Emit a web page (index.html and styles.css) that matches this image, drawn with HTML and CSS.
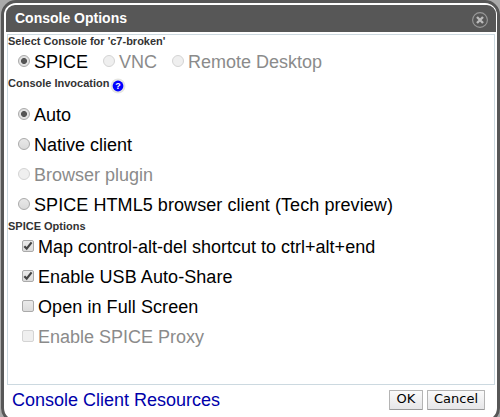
FILE: index.html
```html
<!DOCTYPE html>
<html lang="en">
<head>
<meta charset="utf-8">
<title>Console Options</title>
<link rel="stylesheet" href="styles.css">
</head>
<body>
<div class="dialog">
  <div class="header">
    <span class="title">Console Options</span>
    <svg class="close" width="16" height="16" viewBox="0 0 16 16"><circle cx="8" cy="8" r="7.4" fill="none" stroke="#999" stroke-width="1.1"/><path d="M5 5L11 11M11 5L5 11" stroke="#bbb" stroke-width="2.4"/></svg>
  </div>
  <div class="panel">
    <div class="label">Select Console for 'c7-broken'</div>
    <div class="protocols">
      <label class="option"><i class="radio on"></i><span>SPICE</span></label>
      <label class="option off"><i class="radio"></i><span>VNC</span></label>
      <label class="option off"><i class="radio"></i><span>Remote Desktop</span></label>
    </div>
    <div class="label invocation">Console Invocation<svg class="help" width="16" height="16" viewBox="0 0 16 16"><circle cx="8" cy="8" r="7.5" fill="#e6e6e2"/><circle cx="8" cy="8" r="5.4" fill="#00f"/><text x="8" y="11.2" text-anchor="middle">?</text></svg></div>
    <div class="list radios">
      <label class="option"><i class="radio on"></i><span>Auto</span></label>
      <label class="option"><i class="radio"></i><span>Native client</span></label>
      <label class="option off"><i class="radio"></i><span>Browser plugin</span></label>
      <label class="option wide"><i class="radio"></i><span>SPICE HTML5 browser client (Tech preview)</span></label>
    </div>
    <div class="label">SPICE Options</div>
    <div class="list checks">
      <label class="option"><i class="check"><svg width="12" height="12" viewBox="0 0 12 12"><path d="M2.3 6.2L4.7 8.6L9.6 2.4"/></svg></i><span>Map control-alt-del shortcut to ctrl+alt+end</span></label>
      <label class="option wide"><i class="check"><svg width="12" height="12" viewBox="0 0 12 12"><path d="M2.3 6.2L4.7 8.6L9.6 2.4"/></svg></i><span>Enable USB Auto-Share</span></label>
      <label class="option wide"><i class="check"></i><span>Open in Full Screen</span></label>
      <label class="option off"><i class="check"></i><span>Enable SPICE Proxy</span></label>
    </div>
  </div>
  <div class="footer">
    <a class="link">Console Client Resources</a>
    <button class="btn ok">OK</button>
    <button class="btn cancel">Cancel</button>
  </div>
</div>
</body>
</html>
```
FILE: styles.css
```css
* { box-sizing: border-box; }
html { overflow: hidden; height: 417px; }
body {
  margin: 0;
  height: 417px;
  overflow: hidden;
  background: #aaa;
  font-family: "Liberation Sans", Arial, sans-serif;
}
.dialog {
  width: 499px;
  height: 423px;
  margin-left: 1px;
  border: 3px solid #575757;
  border-radius: 15px;
  background: #fff;
  padding: 2px 1px 0 2px;
}
.header {
  height: 27px;
  background: #575757;
  border-radius: 9px 9px 0 0;
  display: flex;
  align-items: center;
  justify-content: space-between;
  padding: 0 8px 1px 9px;
}
.title {
  color: #fff;
  font-size: 14px;
  font-weight: bold;
}
.close { margin-top: 4px; }
.panel {
  margin: 2px 1px 0 1px;
  height: 351px;
  border: 1px solid #ccd9e0;
}
.label {
  height: 13px;
  line-height: 13px;
  font-size: 11px;
  font-weight: bold;
  color: #333;
  white-space: nowrap;
}
.protocols {
  display: flex;
  height: 26px;
  padding-left: 10px;
  gap: 15px;
}
.option {
  display: flex;
  align-items: center;
  font-size: 18px;
  color: #000;
  white-space: nowrap;
}
.option span {
  line-height: 20px;
  padding-top: 2px;
}
.wide { letter-spacing: 0.07px; }
.off { color: #8b8b8b; }
.invocation {
  display: flex;
  margin-top: 3px;
}
.help { margin: 1px 0 0 1px; }
.help text {
  font: bold 9px "Liberation Sans", sans-serif;
  fill: #fff;
}
.list .option { height: 30px; }
.radios { padding: 9px 0 1px 10px; }
.checks { padding: 0 0 0 14px; margin-top: -2px; }
.radio {
  flex: none;
  width: 12px;
  height: 12px;
  margin-right: 4px;
  border: 1px solid #aaa;
  border-radius: 50%;
  background: linear-gradient(#e8e8e8, #dadada);
}
.radio.on {
  background: radial-gradient(circle, #555 0, #555 2.6px, #e2e2e2 3.4px);
}
.check {
  flex: none;
  width: 12px;
  height: 12px;
  margin-right: 4px;
  border: 1px solid #aaa;
  border-radius: 2px;
  background: linear-gradient(#eaeaea, #dcdcdc);
}
.check svg { display: block; margin: -1px; }
.check path {
  fill: none;
  stroke: #444;
  stroke-width: 2.2;
}
.off i {
  border-color: #d4d4d4;
  background: #efefef;
}
.footer {
  display: flex;
  align-items: flex-start;
  padding: 5px 11px 0 6px;
}
.link {
  flex: 1;
  font-size: 18px;
  line-height: 20px;
  color: #00a;
}
.btn {
  height: 20px;
  padding: 0 0 2px;
  border: 1px solid #b4b4b4;
  border-bottom-color: #999;
  border-radius: 1px;
  background: linear-gradient(#fafafa, #e6e6e8);
  color: #000;
  font: 13px/16px "DejaVu Sans", sans-serif;
}
.ok { width: 34px; margin-right: 4px; }
.cancel { width: 58px; }
```
